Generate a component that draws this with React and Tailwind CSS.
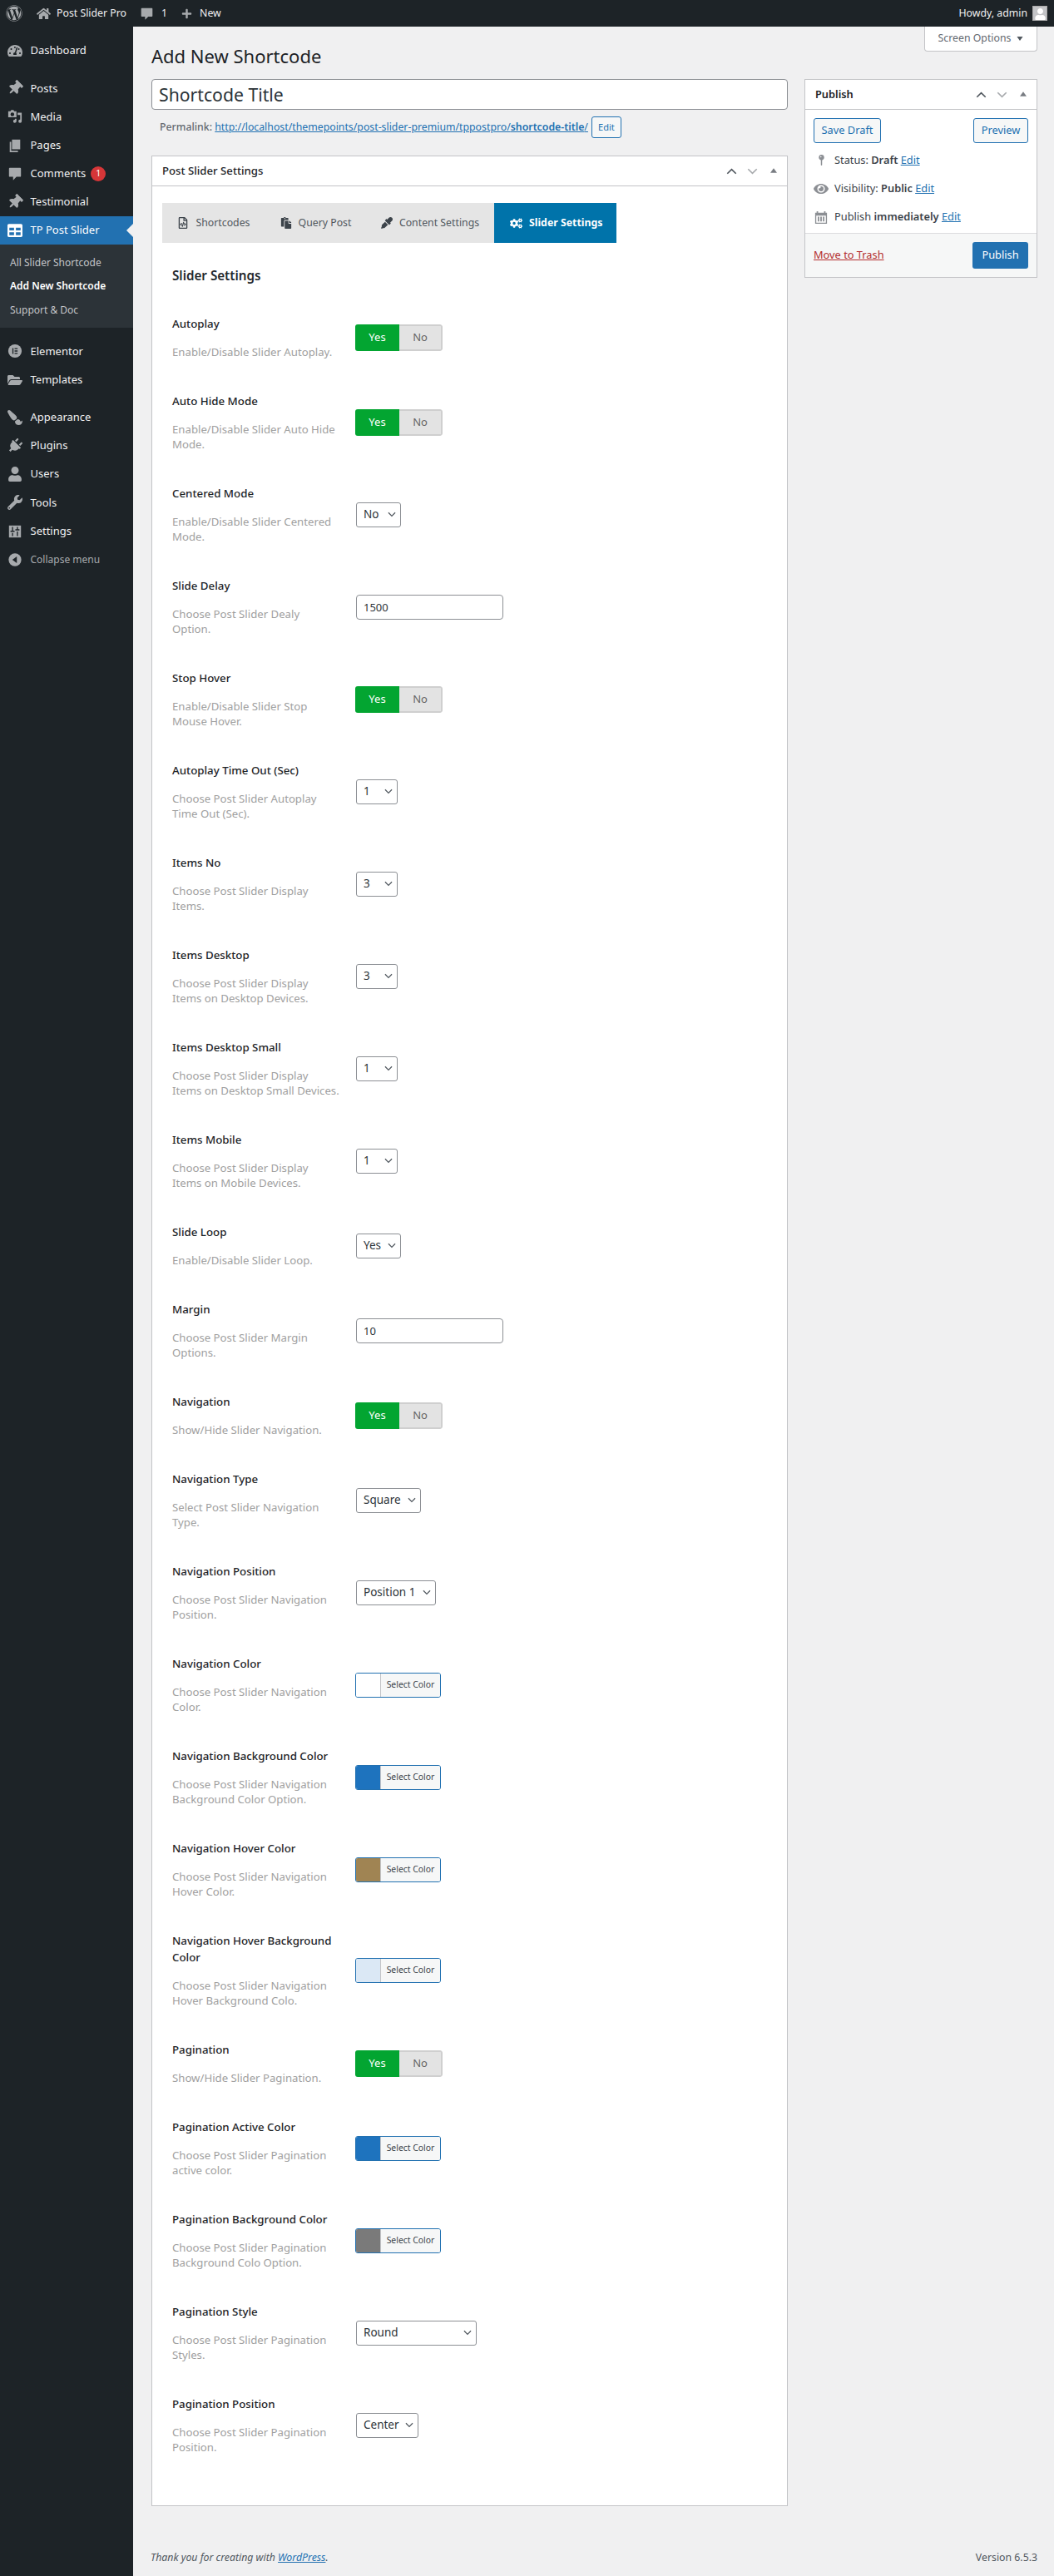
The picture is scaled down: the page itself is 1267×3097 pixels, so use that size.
import React from "react";
import {
  FaWordpress, FaHome, FaPlus, FaTachometerAlt, FaThumbtack, FaFolderOpen, FaPaintBrush, FaPlug,
  FaUser, FaWrench, FaTable, FaRegFileCode, FaPaste, FaEyeDropper, FaCogs, FaEye,
} from "react-icons/fa";

const Bubble = ({ className }) => (
  <svg viewBox="0 0 20 20" className={className} fill="currentColor">
    <path d="M3 2h14a1 1 0 0 1 1 1v10a1 1 0 0 1-1 1h-5l-4.500 4.500V14H3a1 1 0 0 1-1-1V3a1 1 0 0 1 1-1z" />
  </svg>
);
const MediaIcon = ({ className }) => (
  <svg viewBox="0 0 20 20" className={className} fill="currentColor">
    <path fillRule="evenodd" d="M1 3h3l1-1.500h3L9 3h3v8H1V3zm5.500 1.700a2.500 2.500 0 1 0 0 5 2.500 2.500 0 0 0 0-5z" />
    <path d="M13.500 5H19v11.500a2.200 2.200 0 1 1-2-2.200V8h-3.500V5z" />
    <path d="M12 13v3.200a2.200 2.200 0 1 1-2-2V13h2z" />
  </svg>
);
const PagesIcon = ({ className }) => (
  <svg viewBox="0 0 20 20" className={className} fill="currentColor">
    <path d="M6 2h11v13H6z" />
    <path d="M3 5h2v12h9v2H3z" />
  </svg>
);
const ElementorIcon = ({ className }) => (
  <svg viewBox="0 0 20 20" className={className}>
    <circle cx="10" cy="10" r="9" fill="currentColor" />
    <path d="M6.500 6h1.500v8H6.500zM9.500 6h4v1.500h-4zM9.500 9.250h4v1.500h-4zM9.500 12.500h4V14h-4z" fill="#1d2327" />
  </svg>
);
const SettingsIcon = ({ className }) => (
  <svg viewBox="0 0 20 20" className={className}>
    <path fill="currentColor" d="M2 2h16v16H2z" />
    <path fill="#1d2327" d="M6 4h1.500v5H9.500v1.500H4V9h2V4zM6 12h1.500v4H6zM12.500 4H14v3h2v1.500h-5.500V7h2V4zM12.500 10H14v6h-1.500z" />
  </svg>
);
const CollapseIcon = ({ className }) => (
  <svg viewBox="0 0 20 20" className={className}>
    <circle cx="10" cy="10" r="8.500" fill="currentColor" />
    <path d="M12.500 5.500v9L6.500 10z" fill="#1d2327" />
  </svg>
);
const Chevron = ({ up, className }) => (
  <svg viewBox="0 0 16 10" className={className} fill="none" stroke="currentColor" strokeWidth="2">
    <path d={up ? "M1.500 8.500 8 2l6.500 6.500" : "M1.500 1.500 8 8l6.500-6.500"} />
  </svg>
);
const Tri = ({ className }) => (
  <svg viewBox="0 0 10 7" className={className} fill="currentColor"><path d="M5 0l5 7H0z" /></svg>
);
const PinIcon = ({ className }) => (
  <svg viewBox="0 0 12 20" className={className} fill="currentColor">
    <circle cx="6" cy="5" r="4.200" />
    <rect x="5" y="8" width="2" height="10" rx="1" />
    <circle cx="5" cy="4" r="1" fill="#fff" />
  </svg>
);
const CalendarIcon = ({ className }) => (
  <svg viewBox="0 0 18 18" className={className} fill="currentColor">
    <path d="M1 3h2V1h2v2h8V1h2v2h2v15H1V3zm1.500 4v9.500h13V7h-13z" />
    <path d="M4.500 8.500h2v6.500h-2zM8 8.500h2v6.500H8zM11.500 8.500h2v6.500h-2z" />
  </svg>
);

const base = "h-[34.2px] flex items-center shrink-0";
const NavItem = ({ icon: Icon, label, cls = "w-[18px] h-[18px]", extra, badge }) => (
  <a className={`${base} pl-[9px] text-[13px] text-[#f0f0f1]`}>
    <span className="w-[18px] h-[18px] flex items-center justify-center text-[#a7aaad] mr-[9.500px]">
      <Icon className={`${cls} ${extra || ""}`} />
    </span>
    <span>{label}</span>
    {badge ? (
      <span className="ml-[6px] w-[18px] h-[18px] rounded-full bg-[#d63638] text-white text-[10.500px] flex items-center justify-center">{badge}</span>
    ) : null}
  </a>
);

const Sidebar = () => (
  <aside className="w-40 shrink-0 bg-[#1d2327] flex flex-col pt-3">
    <NavItem icon={FaTachometerAlt} label="Dashboard" />
    <div className="h-[11px]" />
    <NavItem icon={FaThumbtack} label="Posts" extra="rotate-45" />
    <NavItem icon={MediaIcon} label="Media" />
    <NavItem icon={PagesIcon} label="Pages" />
    <NavItem icon={Bubble} label="Comments" badge="1" />
    <NavItem icon={FaThumbtack} label="Testimonial" extra="rotate-45" />
    <a className={`${base} relative bg-[#2271b1] pl-[9px] text-[13px] text-white`}>
      <span className="w-[18px] h-[18px] flex items-center justify-center mr-[9.500px]"><FaTable className="w-[18px] h-[18px]" /></span>
      TP Post Slider
      <span className="absolute right-0 top-[9px] border-y-[8px] border-y-transparent border-r-[8px] border-r-[#f0f0f1]" />
    </a>
    <div className="bg-[#2c3338] h-[100px] py-[7px] flex flex-col text-[12px] shrink-0">
      <a className="h-[28.500px] flex items-center pl-3 text-[#c3c4c7]">All Slider Shortcode</a>
      <a className="h-[28.500px] flex items-center pl-3 text-white font-semibold">Add New Shortcode</a>
      <a className="h-[28.500px] flex items-center pl-3 text-[#c3c4c7]">Support &amp; Doc</a>
    </div>
    <div className="h-[11px]" />
    <NavItem icon={ElementorIcon} label="Elementor" />
    <NavItem icon={FaFolderOpen} label="Templates" />
    <div className="h-[11px]" />
    <NavItem icon={FaPaintBrush} label="Appearance" extra="-scale-x-100" />
    <NavItem icon={FaPlug} label="Plugins" extra="rotate-45" />
    <NavItem icon={FaUser} label="Users" />
    <NavItem icon={FaWrench} label="Tools" />
    <NavItem icon={SettingsIcon} label="Settings" />
    <a className={`${base} pl-[9px] text-[12px] text-[#a7aaad]`}>
      <span className="w-[18px] h-[18px] flex items-center justify-center mr-[9.500px]"><CollapseIcon className="w-[18px] h-[18px]" /></span>
      Collapse menu
    </a>
  </aside>
);

const TopBar = () => (
  <header className="h-8 bg-[#1d2327] flex items-center justify-between text-[12.300px] text-[#f0f0f1] shrink-0">
    <div className="flex items-center">
      <FaWordpress className="ml-[7px] w-[20px] h-[20px] text-[#a7aaad]" />
      <FaHome className="ml-[17px] w-[17px] h-[17px] text-[#a7aaad]" />
      <span className="ml-[7px]">Post Slider Pro</span>
      <Bubble className="ml-[16px] w-[17px] h-[17px] text-[#a7aaad]" />
      <span className="ml-[9px]">1</span>
      <FaPlus className="ml-[17px] w-[13px] h-[13px] text-[#a7aaad]" />
      <span className="ml-[9px]">New</span>
    </div>
    <div className="flex items-center">
      <span>Howdy, admin</span>
      <span className="ml-[6px] mr-[8px] w-[18px] h-[18px] bg-[#c3c4c7] border border-[#aaa] flex items-end justify-center overflow-hidden">
        <FaUser className="w-[13px] h-[14px] text-white" />
      </span>
    </div>
  </header>
);

const Handles = () => (
  <div className="flex items-center text-[#50575e] gap-[12px]">
    <Chevron up className="w-[13px] h-[8px]" />
    <Chevron className="w-[13px] h-[8px] text-[#a7aaad]" />
    <Tri className="w-[8px] h-[6px] ml-[3px] mb-[2px] text-[#787c82]" />
  </div>
);

const Toggle = () => (
  <div className="flex h-8 w-[105px] rounded-[3px] overflow-hidden text-[13px] -ml-px">
    <span className="w-[53px] bg-[#03a531] text-white flex items-center justify-center">Yes</span>
    <span className="flex-1 bg-[#e3e3e3] border-2 border-l-0 border-[#cfcfcf] rounded-r-[3px] text-[#666] flex items-center justify-center">No</span>
  </div>
);
const Select = ({ value, w }) => (
  <div className={`${w} h-[30px] border border-[#8c8f94] rounded-[3px] bg-white flex items-center justify-between pl-2 pr-[5px] text-[13.500px] text-[#2c3338]`}>
    <span>{value}</span>
    <Chevron className="w-[10px] h-[7px] text-[#50575e]" />
  </div>
);
const NumberInput = ({ value }) => (
  <input readOnly value={value} className="w-[177px] h-[30px] border border-[#8c8f94] rounded-[4px] bg-white px-2 text-[13px] text-[#2c3338] outline-none" />
);
const ColorPick = ({ color }) => (
  <div className="-ml-px flex w-[103px] h-[30px] border border-[#2271b1] rounded-[3px] overflow-hidden">
    <span className={`w-[30px] border-r border-[#c3c4c7] ${color}`} />
    <span className="flex-1 bg-[#f6f7f7] text-[#3c434a] text-[10.400px] flex items-center justify-center">Select Color</span>
  </div>
);

const rows = [
  ["Autoplay", "Enable/Disable Slider Autoplay.", <Toggle />],
  ["Auto Hide Mode", "Enable/Disable Slider Auto Hide Mode.", <Toggle />],
  ["Centered Mode", "Enable/Disable Slider Centered Mode.", <Select value="No" w="w-[54px]" />],
  ["Slide Delay", "Choose Post Slider Dealy Option.", <NumberInput value="1500" />],
  ["Stop Hover", "Enable/Disable Slider Stop Mouse Hover.", <Toggle />],
  ["Autoplay Time Out (Sec)", "Choose Post Slider Autoplay Time Out (Sec).", <Select value="1" w="w-[50px]" />],
  ["Items No", "Choose Post Slider Display Items.", <Select value="3" w="w-[50px]" />],
  ["Items Desktop", "Choose Post Slider Display Items on Desktop Devices.", <Select value="3" w="w-[50px]" />],
  ["Items Desktop Small", "Choose Post Slider Display Items on Desktop Small Devices.", <Select value="1" w="w-[50px]" />],
  ["Items Mobile", "Choose Post Slider Display Items on Mobile Devices.", <Select value="1" w="w-[50px]" />],
  ["Slide Loop", "Enable/Disable Slider Loop.", <Select value="Yes" w="w-[54px]" />],
  ["Margin", "Choose Post Slider Margin Options.", <NumberInput value="10" />],
  ["Navigation", "Show/Hide Slider Navigation.", <Toggle />],
  ["Navigation Type", "Select Post Slider Navigation Type.", <Select value="Square" w="w-[78px]" />],
  ["Navigation Position", "Choose Post Slider Navigation Position.", <Select value="Position 1" w="w-[96px]" />],
  ["Navigation Color", "Choose Post Slider Navigation Color.", <ColorPick color="bg-white" />],
  ["Navigation Background Color", "Choose Post Slider Navigation Background Color Option.", <ColorPick color="bg-[#1e73be]" />],
  ["Navigation Hover Color", "Choose Post Slider Navigation Hover Color.", <ColorPick color="bg-[#a08453]" />],
  ["Navigation Hover Background Color", "Choose Post Slider Navigation Hover Background Colo.", <ColorPick color="bg-[#dbe8f5]" />],
  ["Pagination", "Show/Hide Slider Pagination.", <Toggle />],
  ["Pagination Active Color", "Choose Post Slider Pagination active color.", <ColorPick color="bg-[#1e73be]" />],
  ["Pagination Background Color", "Choose Post Slider Pagination Background Colo Option.", <ColorPick color="bg-[#7a7a7a]" />],
  ["Pagination Style", "Choose Post Slider Pagination Styles.", <Select value="Round" w="w-[145px]" />],
  ["Pagination Position", "Choose Post Slider Pagination Position.", <Select value="Center" w="w-[75px]" />],
];

const Row = ({ title, desc, control }) => (
  <div className="flex items-center">
    <div className="w-[221px] shrink-0 pt-5 pb-5 pr-5">
      <div className="text-[13.300px] leading-5 font-medium text-[#1d2327]">{title}</div>
      <div className="mt-[15px] text-[13.200px] leading-[18px] text-[#a0a0a0]">{desc}</div>
    </div>
    <div>{control}</div>
  </div>
);

const Tab = ({ icon: Icon, label, w, active, iconCls }) => (
  <div className={`${w} flex items-center gap-[8px] text-[12.300px] ${active ? "pl-[19px] gap-[5px] bg-[#0073aa] text-white font-bold" : "justify-center text-[#50575e]"}`}>
    <Icon className={`${iconCls || "w-[14px] h-[14px]"} ${active ? "text-white" : "text-[#3c434a]"}`} />
    <span>{label}</span>
  </div>
);

const SecondaryBtn = ({ children, className }) => (
  <button className={`h-[30px] border border-[#2271b1] rounded-[3px] bg-[#f6f7f7] text-[#2271b1] text-[12.800px] ${className || ""}`}>{children}</button>
);

const PublishBox = () => (
  <div className="w-[280px] shrink-0 border border-[#c3c4c7] bg-white">
    <div className="h-[36px] border-b border-[#c3c4c7] flex items-center justify-between pl-3 pr-[12px] text-[12.800px] font-semibold text-[#1d2327]">
      <span>Publish</span>
      <Handles />
    </div>
    <div className="px-[10px] pt-[10px]">
      <div className="flex justify-between">
        <SecondaryBtn className="w-[81px]">Save Draft</SecondaryBtn>
        <SecondaryBtn className="w-[66px]">Preview</SecondaryBtn>
      </div>
      <div className="mt-[4px] flex flex-col text-[12.800px] text-[#3c434a]">
        <div className="h-[34px] flex items-center">
          <span className="w-[25px] flex justify-center pr-[7px]"><PinIcon className="w-[9px] h-[16px] text-[#8c8f94]" /></span>
          <span>Status: <b className="font-semibold">Draft</b> <a className="text-[#2271b1] underline">Edit</a></span>
        </div>
        <div className="h-[34px] flex items-center">
          <span className="w-[25px] flex justify-center pr-[7px]"><FaEye className="w-[18px] h-[16px] shrink-0 text-[#8c8f94]" /></span>
          <span>Visibility: <b className="font-semibold">Public</b> <a className="text-[#2271b1] underline">Edit</a></span>
        </div>
        <div className="h-[34px] flex items-center">
          <span className="w-[25px] flex justify-center pr-[7px]"><CalendarIcon className="w-[16px] h-[16px] text-[#8c8f94]" /></span>
          <span>Publish <b className="font-semibold">immediately</b> <a className="text-[#2271b1] underline">Edit</a></span>
        </div>
      </div>
    </div>
    <div className="mt-[2px] h-[53px] border-t border-[#dcdcde] bg-[#f6f7f7] flex items-center justify-between px-[10px]">
      <a className="text-[12.800px] text-[#b32d2e] underline">Move to Trash</a>
      <button className="w-[67px] h-[32px] rounded-[3px] bg-[#2271b1] text-white text-[12.800px]">Publish</button>
    </div>
  </div>
);

export default function App() {
  return (
    <div className="min-h-[3097px] flex flex-col bg-[#f0f0f1] text-[#3c434a]" style={{ fontFamily: '"Noto Sans", "Open Sans", sans-serif' }}>
      <TopBar />
      <div className="flex flex-1">
        <Sidebar />
        <main className="relative flex-1 pl-[22px] pr-5 pt-5 flex flex-col">
          <div className="absolute top-0 right-5 w-[136px] h-[30px] bg-white border border-t-0 border-[#c3c4c7] rounded-b-[4px] flex items-center justify-center gap-[7px] text-[12.300px] text-[#646970]">
            Screen Options <Tri className="w-[8px] h-[5px] rotate-180 text-[#50575e]" />
          </div>
          <h1 className="text-[22px] leading-[30px] text-[#1d2327]">Add New Shortcode</h1>
          <div className="mt-[13px] flex items-start gap-5">
            <div className="w-[765px] shrink-0">
              <input readOnly value="Shortcode Title" className="w-full h-[37px] border border-[#8c8f94] rounded-[4px] bg-white px-[8px] text-[21.200px] text-[#2c3338] outline-none" />
              <div className="mt-[8px] h-[26px] pl-[10px] flex items-center text-[12.300px]">
                <span className="text-[#646970] font-medium">Permalink:&nbsp;</span>
                <a className="text-[#2271b1] underline">http://localhost/themepoints/post-slider-premium/tppostpro/<b className="font-semibold">shortcode-title</b>/</a>
                <button className="ml-1 w-[36px] h-[26px] border border-[#2271b1] rounded-[3px] bg-[#f6f7f7] text-[#2271b1] text-[11px]">Edit</button>
              </div>
              <section className="mt-[21px] border border-[#c3c4c7] bg-white">
                <div className="h-[36px] border-b border-[#c3c4c7] flex items-center justify-between pl-3 pr-[12px] text-[13.200px] font-medium text-[#1d2327]">
                  <span>Post Slider Settings</span>
                  <Handles />
                </div>
                <div className="pt-5 px-3 pb-[41px]">
                  <div className="flex h-12 w-[546px] bg-[#e5e5e5]">
                    <Tab icon={FaRegFileCode} label="Shortcodes" w="w-[124px]" />
                    <Tab icon={FaPaste} label="Query Post" w="w-[121px]" />
                    <Tab icon={FaEyeDropper} label="Content Settings" w="w-[154px]" />
                    <Tab icon={FaCogs} label="Slider Settings" w="w-[147px]" active iconCls="w-[15px] h-[15px]" />
                  </div>
                  <div className="pl-3 pt-[29px] text-[15.200px] leading-5 font-semibold text-[#23282d]">Slider Settings</div>
                  <div className="pl-3 pt-[18px]">
                    {rows.map((r) => (
                      <Row key={r[0]} title={r[0]} desc={r[1]} control={r[2]} />
                    ))}
                  </div>
                </div>
              </section>
            </div>
            <PublishBox />
          </div>
          <footer className="mt-auto -ml-[1px] h-[40px] pt-[9px] flex justify-between text-[12.300px] text-[#50575e]">
            <span className="italic">Thank you for creating with <a className="text-[#2271b1] underline">WordPress</a>.</span>
            <span>Version 6.5.3</span>
          </footer>
        </main>
      </div>
    </div>
  );
}
